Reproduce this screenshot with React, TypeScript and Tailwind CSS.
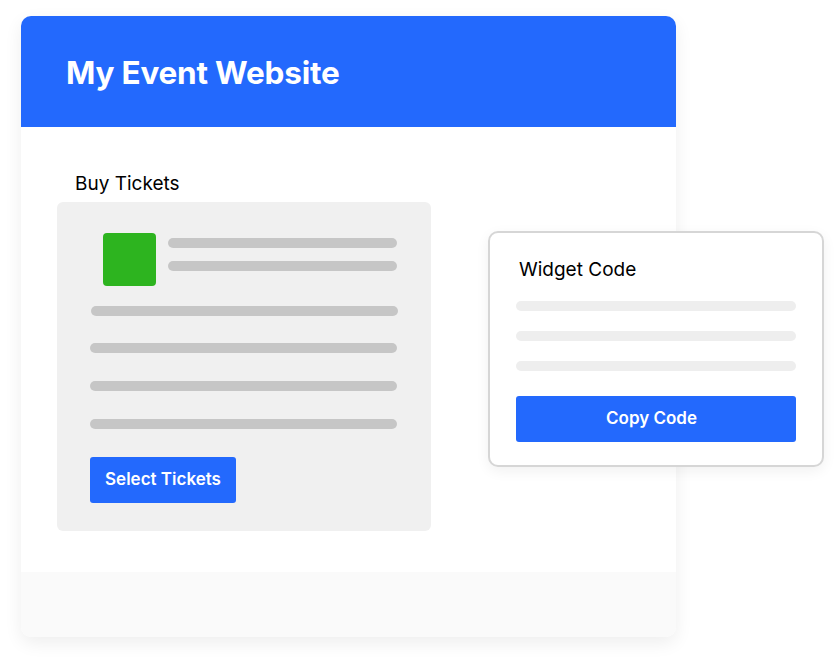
import React from "react";

const Line = ({ className }: { className: string }) => (
  <div className={"h-[10px] rounded-full " + className} />
);

export default function App() {
  return (
    <div
      className="relative w-[840px] h-[657px] bg-white overflow-hidden"
      style={{ fontFamily: "Inter, 'Liberation Sans', sans-serif" }}
    >
      <div className="pt-[16px] pl-[21px]">
        <div className="w-[655px] h-[621px] flex flex-col rounded-[10px] overflow-hidden shadow-[0_6px_18px_rgba(0,0,0,0.07)]">
          <div className="h-[111px] shrink-0 bg-[#2369fd] flex items-center pl-[45px] pt-[3px]">
            <h1 className="text-white font-bold text-[31.5px] leading-none tracking-[-0.2px]">
              My Event Website
            </h1>
          </div>
          <div className="h-[445px] shrink-0 bg-white pl-[36px] pt-[45px]">
            <div className="pl-[18px] text-[19px] leading-[23px] text-black h-[30px]">
              Buy Tickets
            </div>
            <div className="w-[374px] h-[329px] bg-[#f0f0f0] rounded-[6px] pl-[33px] pt-[31px] flex flex-col">
              <div className="flex ml-[13px] gap-[12px]">
                <div className="w-[53px] h-[53px] bg-[#2db41f] rounded-[4px]" />
                <div className="flex flex-col gap-[13px] pt-[5px]">
                  <Line className="w-[229px] bg-[#c6c6c6]" />
                  <Line className="w-[229px] bg-[#c6c6c6]" />
                </div>
              </div>
              <Line className="w-[307px] ml-[1px] mt-[20px] bg-[#c6c6c6]" />
              <Line className="w-[307px] mt-[27px] bg-[#c6c6c6]" />
              <Line className="w-[307px] mt-[28px] bg-[#c6c6c6]" />
              <Line className="w-[307px] mt-[28px] bg-[#c6c6c6]" />
              <button className="mt-[28px] w-[146px] h-[46px] bg-[#2369fd] rounded-[3px] text-white font-semibold text-[17px]">
                Select Tickets
              </button>
            </div>
          </div>
          <div className="flex-1 bg-[#fafafa]" />
        </div>
      </div>

      <div className="absolute left-[488px] top-[231px] w-[336px] h-[236px] bg-white border-2 border-[#d6d6d6] rounded-[10px] shadow-[0_4px_14px_rgba(0,0,0,0.06)] px-[26px] pt-[25px] flex flex-col">
        <div className="pl-[3px] text-[19px] leading-[23px] text-black">
          Widget Code
        </div>
        <div className="mt-[20px] flex flex-col gap-[20px]">
          <Line className="w-full bg-[#eeeeee]" />
          <Line className="w-full bg-[#eeeeee]" />
          <Line className="w-full bg-[#eeeeee]" />
        </div>
        <button className="mt-[25px] w-full h-[46px] bg-[#2369fd] rounded-[3px] text-white font-semibold text-[17px] pr-[9px]">
          Copy Code
        </button>
      </div>
    </div>
  );
}
